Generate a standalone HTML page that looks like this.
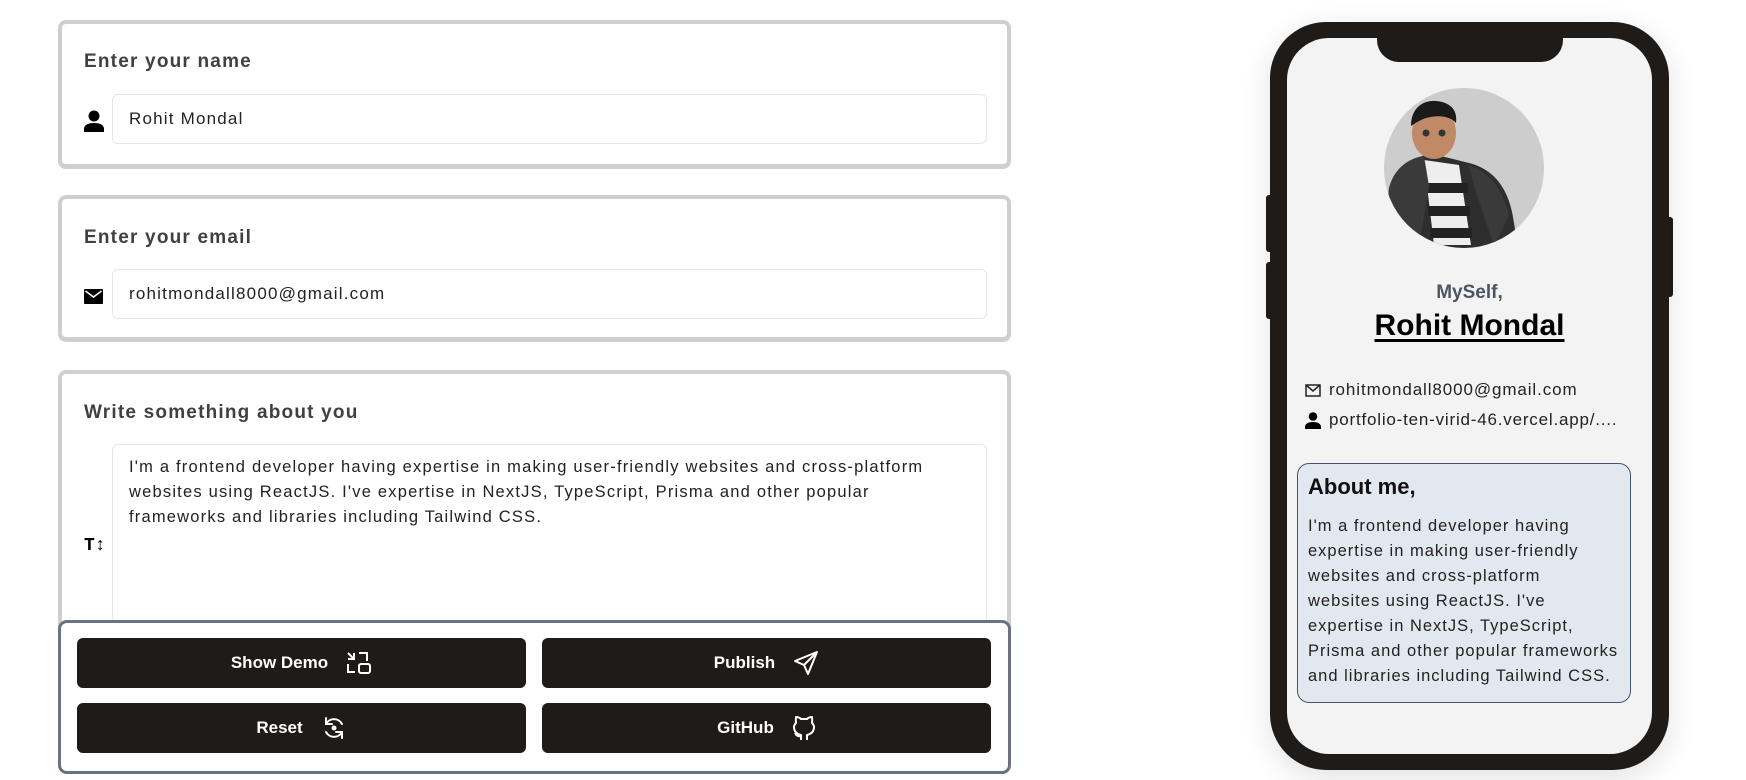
<!DOCTYPE html>
<html><head><meta charset="utf-8"><style>
*{box-sizing:border-box;margin:0;padding:0}
body{width:1746px;height:780px;background:#fff;position:relative;overflow:hidden;font-family:"Liberation Sans",sans-serif}
.card{position:absolute;left:58px;width:953px;background:#fff;border:4px solid #cfcfcf;border-bottom-width:5px;border-radius:8px}
.lbl{position:absolute;left:22px;font-weight:bold;font-size:19px;color:#3f3f46;letter-spacing:1.2px}
.inp{position:absolute;left:50px;right:20px;border:1px solid #e5e5e5;border-radius:6px;font-size:17px;color:#222;padding-left:16px;letter-spacing:1.2px}
.ico{position:absolute;left:22px}
.panel{position:absolute;left:58px;top:620px;width:953px;height:154px;border:3.5px solid #6b7280;border-radius:9px;background:#fff}
.btn{position:absolute;width:449px;height:50px;background:#1f1b18;border-radius:6px;color:#fff;font-weight:bold;font-size:17px;display:flex;align-items:center;justify-content:center;gap:18px}
.phone{position:absolute;left:1270px;top:22px;width:399px;height:748px;background:#1f1b18;border-radius:56px;box-shadow:0 8px 30px rgba(0,0,0,.12)}
.screen{position:absolute;left:17px;top:16px;right:17px;bottom:16px;background:#f3f3f3;border-radius:42px;overflow:hidden}
.side{position:absolute;background:#1f1b18;border-radius:3px}
</style></head><body>

<div class="card" style="top:20px;height:149px">
  <div class="lbl" style="top:27px">Enter your name</div>
  <svg class="ico" style="top:86px" width="20" height="22" viewBox="0 0 20 22"><circle cx="10" cy="6" r="5.5" fill="#000"/><path d="M0 22v-3c0-4 4-6 10-6s10 2 10 6v3z" fill="#000"/></svg>
  <div class="inp" style="top:70px;height:50px;line-height:48px">Rohit Mondal</div>
</div>

<div class="card" style="top:195px;height:147px">
  <div class="lbl" style="top:28px">Enter your email</div>
  <svg class="ico" style="top:90px" width="19" height="15" viewBox="0 0 19 15"><rect width="19" height="15" rx="1" fill="#000"/><path d="M1.5 2l8 6 8-6" stroke="#fff" stroke-width="1.6" fill="none"/></svg>
  <div class="inp" style="top:70px;height:50px;line-height:48px">rohitmondall8000@gmail.com</div>
</div>

<div class="card" style="top:370px;height:404px">
  <div class="lbl" style="top:28px">Write something about you</div>
  <div class="ico" style="top:162px;font-family:'Liberation Mono',monospace;font-weight:bold;font-size:18px">T↕</div>
  <div class="inp" style="top:70px;height:330px;padding-top:10px;line-height:25px;font-size:16.5px;padding-right:20px;white-space:nowrap">I'm a frontend developer having expertise in making user-friendly websites and cross-platform<br>websites using ReactJS. I've expertise in NextJS, TypeScript, Prisma and other popular<br>frameworks and libraries including Tailwind CSS.</div>
</div>

<div class="panel">
  <div class="btn" style="left:16px;top:15px">Show Demo
    <svg width="26" height="24" viewBox="0 0 26 24" fill="none" stroke="#fff" stroke-width="2"><path d="M2 2l6 6M2 8h6V2" /><path d="M13 2h8v8"/><path d="M2 13v8h7"/><rect x="13" y="13" width="11" height="9" rx="2"/></svg></div>
  <div class="btn" style="left:481px;top:15px">Publish
    <svg width="26" height="26" viewBox="0 0 26 26" fill="none" stroke="#fff" stroke-width="2" stroke-linejoin="round"><path d="M24 2L2 11l9 4 4 9z"/><path d="M11 15L24 2"/></svg></div>
  <div class="btn" style="left:16px;top:80px">Reset
    <svg width="26" height="26" viewBox="0 0 26 26" fill="none" stroke="#fff" stroke-width="2" stroke-linecap="round"><path d="M5 9a9 9 0 0 1 16 0M21 17a9 9 0 0 1-16 0"/><path d="M5 3v6h6M21 23v-6h-6"/><circle cx="13" cy="13" r="1.5" fill="#fff"/></svg></div>
  <div class="btn" style="left:481px;top:80px">GitHub
    <svg width="24" height="26" viewBox="0 0 24 26" fill="none" stroke="#fff" stroke-width="2" stroke-linejoin="round"><path d="M9 25v-5c-4-1-7-3-7-8 0-2 1-3 2-4-0.5-2 0-4 0-6 2 0 4 1 5 2h6c1-1 3-2 5-2 0 2 0.5 4 0 6 1 1 2 2 2 4 0 5-3 7-7 8v5"/><path d="M9 21c-3 1-5-1-6-3"/></svg></div>
</div>

<div class="side" style="left:1266px;top:195px;width:8px;height:57px"></div>
<div class="side" style="left:1266px;top:262px;width:8px;height:57px"></div>
<div class="side" style="left:1664px;top:217px;width:9px;height:80px"></div>
<div class="phone">
  <div class="screen">
    <div style="position:absolute;left:90px;top:0;width:186px;height:24px;background:#1f1b18;border-radius:0 0 22px 22px"></div>
    <svg style="position:absolute;left:97px;top:50px" width="160" height="160" viewBox="0 0 160 160">
      <defs><clipPath id="c"><circle cx="80" cy="80" r="80"/></clipPath></defs>
      <circle cx="80" cy="80" r="80" fill="#cdcdcd"/>
      <g clip-path="url(#c)">
        <path d="M5 100c10-25 30-30 40-35l40 10c20 5 40 20 45 60l5 30H0z" fill="#2e2e2e"/>
        <path d="M40 72l35 5 12 80H50z" fill="#eee"/>
        <rect x="42" y="95" width="42" height="10" fill="#222"/><rect x="44" y="118" width="42" height="10" fill="#222"/><rect x="46" y="140" width="42" height="10" fill="#222"/>
        <path d="M5 100c5-20 20-30 35-32l5 30-10 60H0z" fill="#3a3a3a"/>
        <path d="M85 78c20 5 35 25 40 50l-15 30-20-60z" fill="#3a3a3a"/>
        <ellipse cx="50" cy="45" rx="22" ry="26" fill="#c08a66"/>
        <path d="M27 38c0-18 12-26 25-25s22 8 20 22c-5-6-15-8-25-6-8 1-14 5-20 9z" fill="#1a1a1a"/>
        <circle cx="42" cy="45" r="3.5" fill="#333"/><circle cx="58" cy="45" r="3.5" fill="#333"/>
      </g>
    </svg>
    <div style="position:absolute;left:0;right:0;top:244px;text-align:center;font-weight:bold;font-size:19px;color:#4b5563">MySelf,</div>
    <div style="position:absolute;left:0;right:0;top:271px;text-align:center;font-weight:bold;font-size:30px;color:#000;text-decoration:underline;text-underline-offset:4px">Rohit Mondal</div>
    <svg style="position:absolute;left:18px;top:346px" width="16" height="13" viewBox="0 0 16 13" fill="none" stroke="#222" stroke-width="1.5"><rect x="1" y="1" width="14" height="11"/><path d="M1 1l7 6 7-6"/></svg>
    <div style="position:absolute;left:42px;top:342px;font-size:17px;color:#222;letter-spacing:0.9px">rohitmondall8000@gmail.com</div>
    <svg style="position:absolute;left:18px;top:374px" width="16" height="17" viewBox="0 0 16 17"><circle cx="8" cy="4.5" r="4.3" fill="#000"/><path d="M0 17v-2c0-3 3-5 8-5s8 2 8 5v2z" fill="#000"/></svg>
    <div style="position:absolute;left:42px;top:372px;font-size:17px;color:#222;letter-spacing:0.8px">portfolio-ten-virid-46.vercel.app/....</div>
    <div style="position:absolute;left:10px;top:425px;width:334px;height:240px;background:#e2e8f0;border:1px solid #475569;border-radius:12px;padding:10px 10px">
      <div style="font-size:22px;font-weight:bold;color:#111;margin-bottom:14px">About me,</div>
      <div style="font-size:16.5px;line-height:25px;color:#222;white-space:nowrap;letter-spacing:1px">I'm a frontend developer having<br>expertise in making user-friendly<br>websites and cross-platform<br>websites using ReactJS. I've<br>expertise in NextJS, TypeScript,<br>Prisma and other popular frameworks<br>and libraries including Tailwind CSS.</div>
    </div>
  </div>
</div>
</body></html>
